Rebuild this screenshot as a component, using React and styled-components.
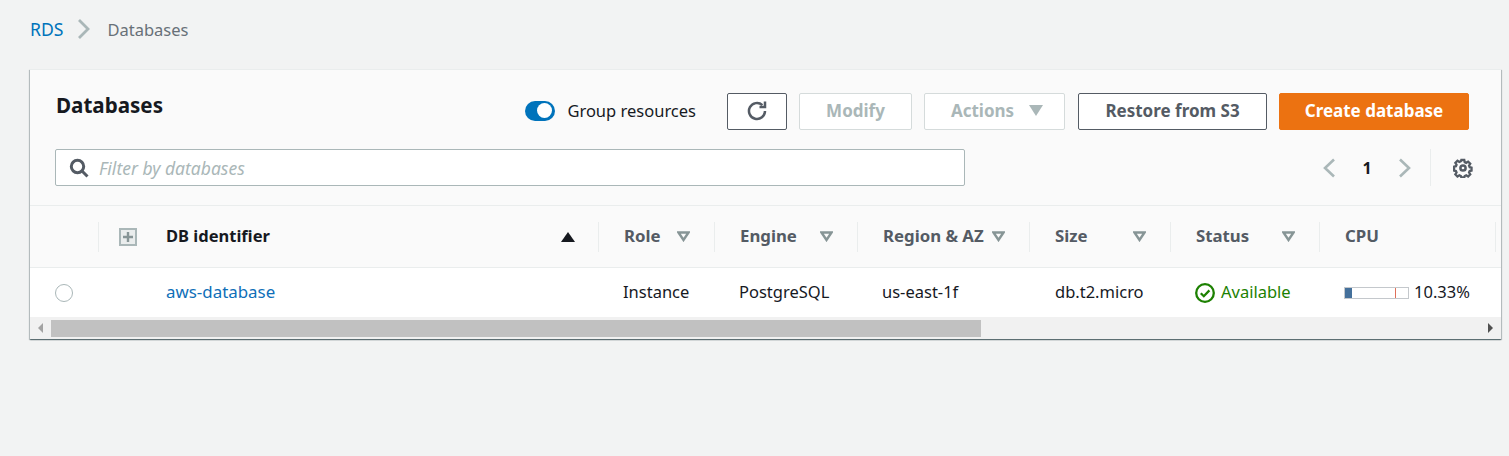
import React from 'react'
import styled, { createGlobalStyle } from 'styled-components'

const GlobalStyle = createGlobalStyle`
  html, body {
    margin: 0;
    padding: 0;
    background: #f2f3f3;
    font-family: "Noto Sans", "Open Sans", sans-serif;
    font-size: 16.5px;
    color: #16191f;
  }
`

const COLUMNS = '69px 41px 459px 116px 143px 172px 141px 149px 176px 1fr'

const Page = styled.div`
  width: 1509px;
  height: 456px;
  overflow: hidden;
  padding: 18px 8px 0 30px;
  box-sizing: border-box;
`

const Breadcrumbs = styled.nav`
  display: flex;
  align-items: center;
  height: 22px;
  margin-bottom: 29px;
`

const CrumbLink = styled.a`
  color: #0073bb;
  font-size: 17.6px;
`

const CrumbCurrent = styled.span`
  color: #687078;
`

const CrumbChevron = styled.svg`
  width: 13px;
  height: 20px;
  margin: 0 17px 0 14px;
  fill: none;
  stroke: #aab7b8;
  stroke-width: 2.8;
`

const Card = styled.section`
  width: 1471px;
  background: #fafafa;
  border-top: 1px solid #eaeded;
  box-shadow: 0 1px 1px 0 rgba(0, 28, 36, 0.4), 1px 1px 1px 0 rgba(0, 28, 36, 0.2), -1px 1px 1px 0 rgba(0, 28, 36, 0.2);
`

const CardHeader = styled.header`
  height: 136px;
  padding: 23px 32px 0 26px;
  box-sizing: border-box;
  border-bottom: 1px solid #eaeded;
`

const TopRow = styled.div`
  display: flex;
  align-items: flex-start;
  justify-content: space-between;
  height: 37px;
  margin-bottom: 19px;
`

const Title = styled.h1`
  margin: -1px 0 0;
  font-size: 20.6px;
  line-height: 26px;
  font-weight: 700;
  color: #16191f;
`

const Actions = styled.div`
  display: flex;
  align-items: center;
`

const ToggleGroup = styled.label`
  display: flex;
  align-items: center;
  margin: 0 31px 2px 0;
  gap: 12px;
`

const ToggleTrack = styled.span`
  width: 30px;
  height: 20px;
  border-radius: 10px;
  background: #0073bb;
  position: relative;
  &::after {
    content: '';
    position: absolute;
    right: 3px;
    top: 2.5px;
    width: 15px;
    height: 15px;
    border-radius: 50%;
    background: #fff;
  }
`

const Button = styled.button`
  height: 37px;
  box-sizing: border-box;
  width: ${p => p.$width}px;
  margin-left: ${p => p.$gap || 0}px;
  padding: 0 0 2px ${p => p.$inset || 0}px;
  display: flex;
  align-items: center;
  justify-content: center;
  gap: 15px;
  font-family: inherit;
  font-size: 17px;
  font-weight: 700;
  border-radius: 2px;
  border: 1px solid ${p => p.$primary ? '#ec7211' : p.disabled ? '#d5dbdb' : '#545b64'};
  background: ${p => p.$primary ? '#ec7211' : '#fff'};
  color: ${p => p.$primary ? '#fff' : p.disabled ? '#aab7b8' : '#545b64'};
`

const CaretDown = styled.span`
  width: 0;
  height: 0;
  border-left: 7px solid transparent;
  border-right: 7px solid transparent;
  border-top: 11px solid #aab7b8;
`

const FilterRow = styled.div`
  display: flex;
  align-items: center;
  justify-content: space-between;
`

const FilterBox = styled.div`
  width: 910px;
  height: 37px;
  box-sizing: border-box;
  border: 1px solid #aab7b8;
  border-radius: 2px;
  background: #fff;
  display: flex;
  align-items: center;
  padding-left: 13px;
  gap: 10px;
  margin-left: -1px;
`

const FilterInput = styled.input`
  flex: 1;
  border: 0;
  outline: 0;
  padding: 0;
  background: transparent;
  font-family: inherit;
  font-size: 17.5px;
  font-style: italic;
  &::placeholder {
    color: #aab7b8;
    opacity: 1;
  }
`

const Pager = styled.div`
  display: flex;
  align-items: center;
  height: 37px;
  margin-right: -4px;
`

const PagerChevron = styled.svg`
  width: 14px;
  height: 20px;
  fill: none;
  stroke: #aab7b8;
  stroke-width: 2.6;
`

const PageNumber = styled.span`
  width: 62px;
  text-align: center;
  font-size: 16px;
  font-weight: 700;
`

const PagerDivider = styled.span`
  width: 1px;
  height: 37px;
  background: #eaeded;
  margin: 0 22px 0 18px;
`

const Icon = styled.svg`
  display: block;
  flex: none;
  fill: none;
  stroke: ${p => p.$color || '#545b64'};
`

const HeadRow = styled.div`
  display: grid;
  grid-template-columns: ${COLUMNS};
  height: 61px;
  align-items: center;
  border-bottom: 1px solid #eaeded;
`

const HeadCell = styled.div`
  height: 30px;
  box-sizing: border-box;
  display: flex;
  align-items: center;
  justify-content: space-between;
  font-size: ${p => p.$active ? '16.5px' : '16.8px'};
  font-weight: 700;
  color: ${p => p.$active ? '#16191f' : '#545b64'};
  padding: ${p => p.$padding || '0 24px 0 25px'};
  border-right: ${p => p.$noDivider ? '0' : '1px solid #eaeded'};
`

const HeadLabel = styled.span`
  padding-bottom: 2px;
`

const SortDown = styled.svg`
  width: 13px;
  height: 11px;
  fill: none;
  stroke: #879596;
  stroke-width: 2.4;
`

const SortUp = styled.span`
  width: 0;
  height: 0;
  border-left: 7px solid transparent;
  border-right: 7px solid transparent;
  border-bottom: 10px solid #16191f;
`

const ExpandBox = styled.span`
  width: 18px;
  height: 18px;
  box-sizing: border-box;
  border: 2px solid #aab7b8;
  background: #eaeded;
  display: flex;
  align-items: center;
  justify-content: center;
`

const BodyRow = styled.div`
  display: grid;
  grid-template-columns: ${COLUMNS};
  height: 49px;
  align-items: center;
  background: #fff;
`

const BodyCell = styled.div`
  padding-left: ${p => p.$pad ?? 24}px;
  white-space: nowrap;
  display: flex;
  align-items: center;
`

const CellText = styled.span`
  padding-bottom: 2px;
`

const Radio = styled.span`
  width: 18px;
  height: 18px;
  box-sizing: border-box;
  border-radius: 50%;
  border: 1.5px solid #aab7b8;
  background: #fff;
`

const RowLink = styled.a`
  color: #0f6fb8;
  font-size: 16.9px;
  padding-bottom: 2px;
`

const StatusText = styled(CellText)`
  color: #1d8102;
  margin-left: 6px;
`

const Meter = styled.span`
  width: 65px;
  height: 12px;
  box-sizing: border-box;
  border: 1px solid #c4c8cc;
  position: relative;
  margin-right: 5px;
`

const MeterFill = styled.span`
  position: absolute;
  left: 0;
  top: 0;
  bottom: 0;
  background: #44709b;
`

const MeterMark = styled.span`
  position: absolute;
  top: 0;
  bottom: 0;
  left: 50px;
  width: 1px;
  background: #d13212;
  opacity: 0.7;
`

const Scrollbar = styled.div`
  height: 22px;
  background: #f1f1f1;
  display: flex;
  align-items: center;
`

const ScrollArrow = styled.span`
  width: 21px;
  display: flex;
  justify-content: center;
  &::before {
    content: '';
    border-top: 5px solid transparent;
    border-bottom: 5px solid transparent;
    ${p => p.$right ? 'border-left: 5px solid #505050;' : 'border-right: 5px solid #a3a3a3;'}
  }
`

const ScrollTrack = styled.div`
  flex: 1;
  height: 17px;
  margin-top: 1px;
`

const ScrollThumb = styled.div`
  height: 100%;
  background: #c1c1c1;
`

const columns = [
  { label: 'Role' },
  { label: 'Engine' },
  { label: 'Region & AZ' },
  { label: 'Size' },
  { label: 'Status' }
]

const SortIcon = () => (
  <SortDown viewBox='0 0 13 11'>
    <path d='M1.5 1.5h10L6.5 9z' />
  </SortDown>
)

const App = () => {
  const cpu = 10.33

  return (
    <Page>
      <GlobalStyle />
      <Breadcrumbs>
        <CrumbLink>RDS</CrumbLink>
        <CrumbChevron viewBox='0 0 13 20'>
          <path d='M2 1l9 9-9 9' />
        </CrumbChevron>
        <CrumbCurrent>Databases</CrumbCurrent>
      </Breadcrumbs>
      <Card>
        <CardHeader>
          <TopRow>
            <Title>Databases</Title>
            <Actions>
              <ToggleGroup>
                <ToggleTrack />
                Group resources
              </ToggleGroup>
              <Button $width={60}>
                <Icon width='22' height='22' viewBox='0 0 22 22' strokeWidth='2.5'>
                  <path d='M19 11a8 8 0 1 1-2.6-5.9' />
                  <path d='M19 1.5v5.5h-5.5' />
                </Icon>
              </Button>
              <Button $width={113} $gap={12} disabled>Modify</Button>
              <Button $width={141} $gap={12} $inset={5} disabled>Actions<CaretDown /></Button>
              <Button $width={189} $gap={13}>Restore from S3</Button>
              <Button $width={190} $gap={12} $primary>Create database</Button>
            </Actions>
          </TopRow>
          <FilterRow>
            <FilterBox>
              <Icon width='20' height='20' viewBox='0 0 20 20' strokeWidth='3'>
                <circle cx='8.5' cy='8.5' r='6.2' />
                <path d='M13 13l5.5 5.5' />
              </Icon>
              <FilterInput placeholder='Filter by databases' readOnly />
            </FilterBox>
            <Pager>
              <PagerChevron viewBox='0 0 14 20'>
                <path d='M12 1.5L3 10l9 8.5' />
              </PagerChevron>
              <PageNumber>1</PageNumber>
              <PagerChevron viewBox='0 0 14 20'>
                <path d='M2 1.5l9 8.5-9 8.5' />
              </PagerChevron>
              <PagerDivider />
              <Icon width='20' height='20' viewBox='0 0 20 20' strokeWidth='2.5'>
                <circle cx='10' cy='10' r='2.6' />
                <path d='M8.4 1.5h3.2l.5 2.4 1.6.7 2.1-1.3 2.3 2.3-1.3 2.1.7 1.6 2 .5v3.2l-2 .5-.7 1.6 1.3 2.1-2.3 2.3-2.1-1.3-1.6.7-.5 1.6H8.4l-.5-1.6-1.6-.7-2.1 1.3-2.3-2.3 1.3-2.1-.7-1.6-2-.5V8.8l2-.5.7-1.6-1.3-2.1 2.3-2.3 2.1 1.3 1.6-.7z' transform='translate(.6 .6) scale(.92)' />
              </Icon>
            </Pager>
          </FilterRow>
        </CardHeader>
        <HeadRow>
          <HeadCell />
          <HeadCell $noDivider $padding='0 0 0 20px'>
            <ExpandBox>
              <Icon width='10' height='10' viewBox='0 0 10 10' $color='#879596' strokeWidth='2.4'>
                <path d='M5 0v10M0 5h10' />
              </Icon>
            </ExpandBox>
          </HeadCell>
          <HeadCell $active $padding='0 23px 0 26px'>
            <HeadLabel>DB identifier</HeadLabel>
            <SortUp />
          </HeadCell>
          {columns.map(col => (
            <HeadCell key={col.label}>
              <HeadLabel>{col.label}</HeadLabel>
              <SortIcon />
            </HeadCell>
          ))}
          <HeadCell><HeadLabel>CPU</HeadLabel></HeadCell>
        </HeadRow>
        <BodyRow>
          <BodyCell $pad={25}><Radio /></BodyCell>
          <BodyCell />
          <BodyCell $pad={26}><RowLink>aws-database</RowLink></BodyCell>
          <BodyCell><CellText>Instance</CellText></BodyCell>
          <BodyCell><CellText>PostgreSQL</CellText></BodyCell>
          <BodyCell><CellText>us-east-1f</CellText></BodyCell>
          <BodyCell $pad={25}><CellText>db.t2.micro</CellText></BodyCell>
          <BodyCell>
            <Icon width='20' height='20' viewBox='0 0 20 20' $color='#1d8102' strokeWidth='2.3'>
              <circle cx='10' cy='10' r='8.8' />
              <path d='M5.8 10.2l3 3 5.6-5.8' />
            </Icon>
            <StatusText>Available</StatusText>
          </BodyCell>
          <BodyCell>
            <Meter>
              <MeterFill style={{ width: `${cpu}%` }} />
              <MeterMark />
            </Meter>
            <CellText>{cpu}%</CellText>
          </BodyCell>
        </BodyRow>
        <Scrollbar>
          <ScrollArrow />
          <ScrollTrack>
            <ScrollThumb style={{ width: `${(930 / 1429) * 100}%` }} />
          </ScrollTrack>
          <ScrollArrow $right />
        </Scrollbar>
      </Card>
    </Page>
  )
}

export default App
